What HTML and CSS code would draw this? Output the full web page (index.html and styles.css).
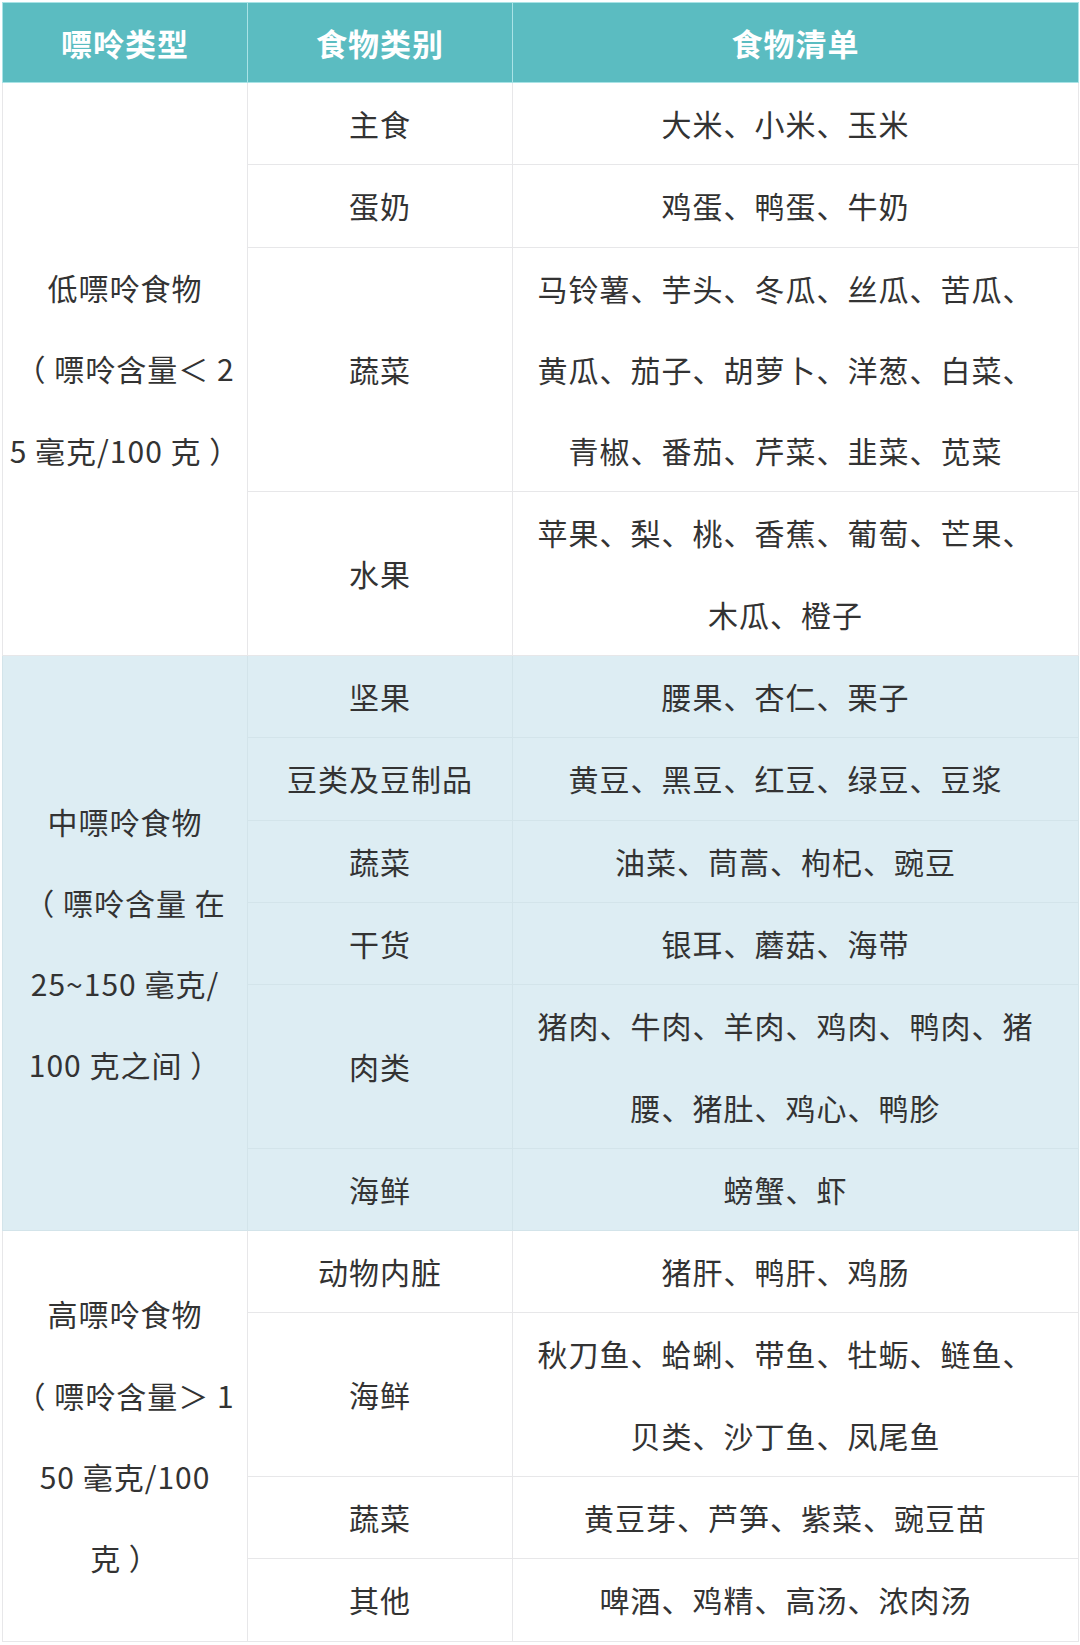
FILE: index.html
```html
<!DOCTYPE html>
<html lang="zh-CN">
<head>
<meta charset="utf-8">
<title>嘌呤食物分类</title>
<link rel="stylesheet" href="styles.css">
</head>
<body>
<table class="purine">
  <colgroup>
    <col class="c-type">
    <col class="c-cat">
    <col class="c-list">
  </colgroup>
  <thead>
    <tr>
      <th>嘌呤类型</th>
      <th>食物类别</th>
      <th>食物清单</th>
    </tr>
  </thead>
  <tbody class="grp low">
    <tr>
      <td class="type" rowspan="4">低嘌呤食物<br>（ 嘌呤含量＜ 2<br>5 毫克/100 克 ）</td>
      <td class="cat">主食</td>
      <td class="list">大米、小米、玉米</td>
    </tr>
    <tr>
      <td class="cat">蛋奶</td>
      <td class="list">鸡蛋、鸭蛋、牛奶</td>
    </tr>
    <tr>
      <td class="cat">蔬菜</td>
      <td class="list">马铃薯、芋头、冬瓜、丝瓜、苦瓜、<br>黄瓜、茄子、胡萝卜、洋葱、白菜、<br>青椒、番茄、芹菜、韭菜、苋菜</td>
    </tr>
    <tr>
      <td class="cat">水果</td>
      <td class="list">苹果、梨、桃、香蕉、葡萄、芒果、<br>木瓜、橙子</td>
    </tr>
  </tbody>
  <tbody class="grp mid">
    <tr>
      <td class="type" rowspan="6">中嘌呤食物<br>（ 嘌呤含量 在<br>25~150 毫克/<br>100 克之间 ）</td>
      <td class="cat">坚果</td>
      <td class="list">腰果、杏仁、栗子</td>
    </tr>
    <tr>
      <td class="cat">豆类及豆制品</td>
      <td class="list">黄豆、黑豆、红豆、绿豆、豆浆</td>
    </tr>
    <tr>
      <td class="cat">蔬菜</td>
      <td class="list">油菜、茼蒿、枸杞、豌豆</td>
    </tr>
    <tr>
      <td class="cat">干货</td>
      <td class="list">银耳、蘑菇、海带</td>
    </tr>
    <tr>
      <td class="cat">肉类</td>
      <td class="list">猪肉、牛肉、羊肉、鸡肉、鸭肉、猪<br>腰、猪肚、鸡心、鸭胗</td>
    </tr>
    <tr>
      <td class="cat">海鲜</td>
      <td class="list">螃蟹、虾</td>
    </tr>
  </tbody>
  <tbody class="grp high">
    <tr>
      <td class="type" rowspan="4">高嘌呤食物<br>（ 嘌呤含量＞ 1<br>50 毫克/100<br>克 ）</td>
      <td class="cat">动物内脏</td>
      <td class="list">猪肝、鸭肝、鸡肠</td>
    </tr>
    <tr>
      <td class="cat">海鲜</td>
      <td class="list">秋刀鱼、蛤蜊、带鱼、牡蛎、鲢鱼、<br>贝类、沙丁鱼、凤尾鱼</td>
    </tr>
    <tr>
      <td class="cat">蔬菜</td>
      <td class="list">黄豆芽、芦笋、紫菜、豌豆苗</td>
    </tr>
    <tr>
      <td class="cat">其他</td>
      <td class="list">啤酒、鸡精、高汤、浓肉汤</td>
    </tr>
  </tbody>
</table>
</body>
</html>
```

FILE: styles.css
```css
html, body {
  margin: 0;
  padding: 0;
  background: #ffffff;
}

body {
  padding: 2px 2px 0 2px;
  font-family: "Noto Sans CJK SC", "Noto Sans", sans-serif;
  color: #333333;
}

.purine {
  width: 1076px;
  border-collapse: collapse;
  table-layout: fixed;
  font-size: 30px;
  letter-spacing: 1px;
}

.c-type { width: 245px; }
.c-cat { width: 265px; }
.c-list { width: 566px; }

.purine th {
  background: #5bbcc1;
  color: #ffffff;
  font-weight: 700;
  font-size: 31px;
  line-height: 79px;
  padding: 0;
  text-align: center;
  border: 1px solid #a9e3e6;
}

.purine td {
  padding: 0;
  line-height: 81.3px;
  text-align: center;
  vertical-align: middle;
  border: 1px solid #e7e7e9;
}

.purine td.list {
  padding-right: 20px;
}

.mid td {
  background: #ddedf3;
  border-color: #d3e4ea;
}
```
